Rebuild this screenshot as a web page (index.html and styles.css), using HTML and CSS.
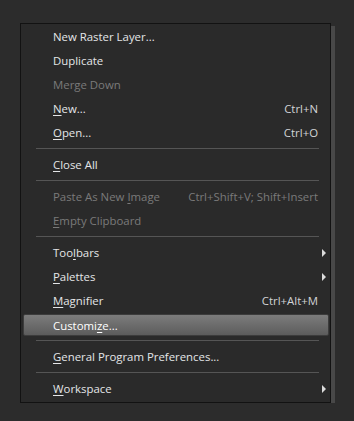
FILE: index.html
```html
<!DOCTYPE html>
<html lang="en">
<head>
    <meta charset="UTF-8">
    <title>Menu</title>
    <link rel="stylesheet" href="styles.css">
</head>
<body>
    <div class="menu-wrap">
        <ul class="menu">
            <li class="item"><span class="label">New Raster Layer...</span></li>
            <li class="item"><span class="label">Duplicate</span></li>
            <li class="item disabled"><span class="label">Merge Down</span></li>
            <li class="item"><span class="label"><u>N</u>ew...</span><span class="key">Ctrl+N</span></li>
            <li class="item"><span class="label"><u>O</u>pen...</span><span class="key">Ctrl+O</span></li>
            <li class="sep"></li>
            <li class="item"><span class="label"><u>C</u>lose All</span></li>
            <li class="sep"></li>
            <li class="item disabled"><span class="label">Paste As New <u>I</u>mage</span><span class="key">Ctrl+Shift+V; Shift+Insert</span></li>
            <li class="item disabled"><span class="label"><u>E</u>mpty Clipboard</span></li>
            <li class="sep"></li>
            <li class="item sub"><span class="label">Too<u>l</u>bars</span></li>
            <li class="item sub"><span class="label"><u>P</u>alettes</span></li>
            <li class="item"><span class="label"><u>M</u>agnifier</span><span class="key">Ctrl+Alt+M</span></li>
            <li class="item active"><span class="label">Customi<u>z</u>e...</span></li>
            <li class="sep"></li>
            <li class="item"><span class="label"><u>G</u>eneral Program Preferences...</span></li>
            <li class="sep"></li>
            <li class="item sub"><span class="label"><u>W</u>orkspace</span></li>
        </ul>
    </div>
</body>
</html>
```

FILE: styles.css
```css
body {
    margin: 0;
    background-color: #2c2c2c;
    font-family: "Open Sans", "Noto Sans", sans-serif;
    font-size: 11.4px;
}

.menu-wrap {
    padding: 23px 0 0 20px;
}

.menu {
    list-style: none;
    margin: 0;
    padding: 1px 0;
    width: 309px;
    background-color: #2a2a2a;
    border: 1px solid #121212;
    box-shadow: 4px 3px 0 #484848;
}

.item {
    height: 23px;
    padding-bottom: 1px;
    display: flex;
    align-items: center;
    justify-content: space-between;
    padding-left: 32px;
    padding-right: 12px;
    position: relative;
    color: #e4e6e8;
}

.item u {
    text-underline-offset: 2px;
}

.key {
    color: #d2d4d6;
}

.disabled,
.disabled .key {
    color: #7a7a7a;
}

.sub::after {
    content: "";
    position: absolute;
    right: 4px;
    top: 8px;
    border-left: 4px solid #dcdcdc;
    border-top: 4px solid transparent;
    border-bottom: 4px solid transparent;
}

.active {
    margin: 1px 1px 1px 2px;
    height: 20px;
    padding-bottom: 0;
    padding-left: 29px;
    border: 1px solid #3c3c3c;
    border-radius: 2px;
    background: linear-gradient(#7c7c7c, #5c5c5c);
    color: #ffffff;
}

.sep {
    height: 8px;
    display: flex;
    align-items: flex-start;
}

.sep::before {
    content: "";
    margin: 3px 11px 0 15px;
    flex: 1;
    height: 1px;
    background-color: #555555;
}
```
